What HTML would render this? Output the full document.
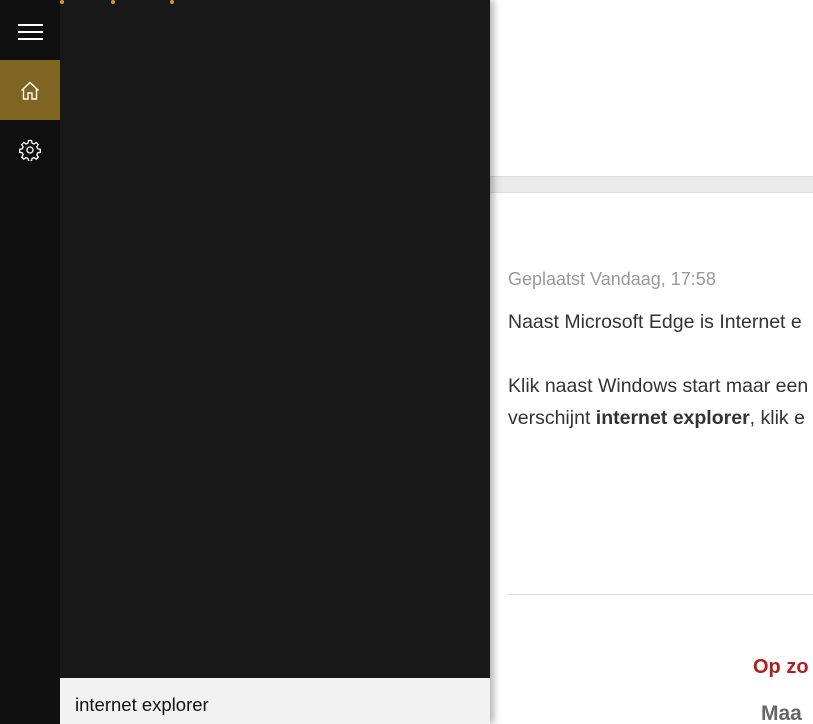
<!DOCTYPE html>
<html><head><style>
html,body{margin:0;width:813px;height:724px;overflow:hidden}
body{background:#fff;font-family:"Liberation Sans",sans-serif}
#w{position:relative;width:813px;height:724px;overflow:hidden}
.abs{position:absolute}
.t{position:absolute;white-space:nowrap;font-size:19.5px;color:#333}
</style></head><body><div id="w">
<div class="abs" style="left:490px;top:176px;width:323px;height:15px;background:#ebebeb;border-top:1px solid #ddd;border-bottom:1px solid #ddd"></div>
<div class="t" style="left:508px;top:269px;color:#999;font-size:18px">Geplaatst Vandaag, 17:58</div>
<div class="t" style="left:508px;top:311px">Naast Microsoft Edge is Internet e</div>
<div class="t" style="left:508px;top:375px">Klik naast Windows start maar een</div>
<div class="t" style="left:508px;top:407px">verschijnt <b>internet explorer</b>, klik e</div>
<div class="abs" style="left:508px;top:594px;width:305px;height:1px;background:#ddd"></div>
<div class="t" style="left:753px;top:656px;color:#b0201e;font-weight:bold;font-size:20px">Op zo</div>
<div class="t" style="left:761px;top:702px;color:#666;font-weight:bold;font-size:21px">Maa</div>
<div class="abs" style="left:0;top:0;width:490px;height:724px;background:#181818;box-shadow:3px 0 8px rgba(0,0,0,.35)"></div>
<div class="abs" style="left:0;top:0;width:60px;height:724px;background:#0f0f0f"></div>
<div class="abs" style="left:60px;top:0;width:4px;height:4px;border-radius:2px;background:#d49a2a"></div>
<div class="abs" style="left:111px;top:0;width:4px;height:4px;border-radius:2px;background:#d49a2a"></div>
<div class="abs" style="left:170px;top:0;width:4px;height:4px;border-radius:2px;background:#d49a2a"></div>
<div class="abs" style="left:18px;top:24px;width:25px;height:2px;background:#fff"></div>
<div class="abs" style="left:18px;top:31px;width:25px;height:2px;background:#fff"></div>
<div class="abs" style="left:18px;top:38px;width:25px;height:2px;background:#fff"></div>
<div class="abs" style="left:0;top:60px;width:60px;height:60px;background:#806422"></div>
<svg class="abs" style="left:20px;top:81px" width="20" height="20" viewBox="0 0 20 20"><path d="M1.5 9.5 L10 1.5 L18.5 9.5 M3.5 8 V18 H8 V12 H12 V18 H16.5 V8" fill="none" stroke="#fff" stroke-width="1.4"/></svg>
<svg class="abs" style="left:19px;top:139px" width="22" height="22" viewBox="0 0 22 22"><g fill="none" stroke="#fff" stroke-width="1.3"><circle cx="11" cy="11" r="3"/><path d="M9.5 1.5h3l.5 2.6 2 .9 2.2-1.5 2.1 2.1-1.5 2.2.9 2 2.6.5v3l-2.6.5-.9 2 1.5 2.2-2.1 2.1-2.2-1.5-2 .9-.5 2.6h-3l-.5-2.6-2-.9-2.2 1.5-2.1-2.1 1.5-2.2-.9-2-2.6-.5v-3l2.6-.5.9-2-1.5-2.2 2.1-2.1 2.2 1.5 2-.9z"/></g></svg>
<div class="abs" style="left:60px;top:678px;width:430px;height:46px;background:#f2f2f2"></div>
<div class="t" style="left:75px;top:694px;font-size:18.5px;color:#111">internet explorer</div>
</div></body></html>
